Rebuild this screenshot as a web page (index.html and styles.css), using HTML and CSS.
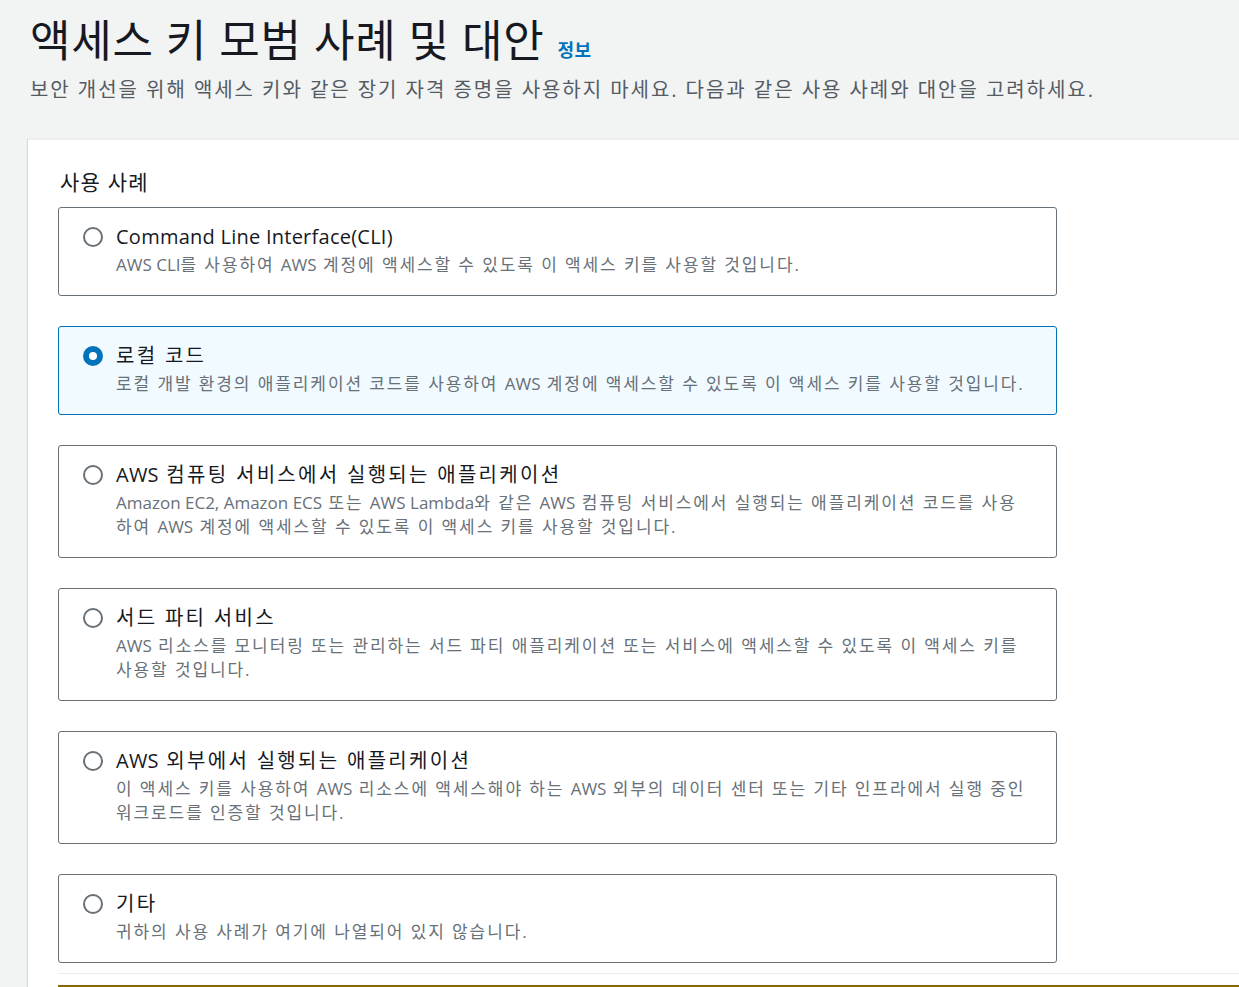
FILE: index.html
```html
<!DOCTYPE html>
<html lang="ko">
<head>
<meta charset="utf-8">
<link rel="stylesheet" href="styles.css">
</head>
<body>
<header class="page-header">
  <h1 class="title">액세스 키 모범 사례 및 대안<a class="info" href="#">정보</a></h1>
  <p class="subtitle">보안 개선을 위해 액세스 키와 같은 장기 자격 증명을 사용하지 마세요. 다음과 같은 사용 사례와 대안을 고려하세요.</p>
</header>
<main class="panel">
  <div class="group-label">사용 사례</div>
  <div class="cards">
    <label class="card">
      <span class="radio"></span>
      <span class="text">
        <span class="card-title"><span class="en">Command Line Interface(CLI)</span></span>
        <span class="card-desc"><span class="en">AWS CLI</span>를 사용하여 <span class="en">AWS</span> 계정에 액세스할 수 있도록 이 액세스 키를 사용할 것입니다.</span>
      </span>
    </label>
    <label class="card selected">
      <span class="radio"></span>
      <span class="text">
        <span class="card-title">로컬 코드</span>
        <span class="card-desc">로컬 개발 환경의 애플리케이션 코드를 사용하여 <span class="en">AWS</span> 계정에 액세스할 수 있도록 이 액세스 키를 사용할 것입니다.</span>
      </span>
    </label>
    <label class="card">
      <span class="radio"></span>
      <span class="text">
        <span class="card-title"><span class="en">AWS</span> 컴퓨팅 서비스에서 실행되는 애플리케이션</span>
        <span class="card-desc"><span class="en">Amazon EC2, Amazon ECS</span> 또는 <span class="en">AWS Lambda</span>와 같은 <span class="en">AWS</span> 컴퓨팅 서비스에서 실행되는 애플리케이션 코드를 사용하여 <span class="en">AWS</span> 계정에 액세스할 수 있도록 이 액세스 키를 사용할 것입니다.</span>
      </span>
    </label>
    <label class="card">
      <span class="radio"></span>
      <span class="text">
        <span class="card-title">서드 파티 서비스</span>
        <span class="card-desc"><span class="en">AWS</span> 리소스를 모니터링 또는 관리하는 서드 파티 애플리케이션 또는 서비스에 액세스할 수 있도록 이 액세스 키를 사용할 것입니다.</span>
      </span>
    </label>
    <label class="card">
      <span class="radio"></span>
      <span class="text">
        <span class="card-title"><span class="en">AWS</span> 외부에서 실행되는 애플리케이션</span>
        <span class="card-desc">이 액세스 키를 사용하여 <span class="en">AWS</span> 리소스에 액세스해야 하는 <span class="en">AWS</span> 외부의 데이터 센터 또는 기타 인프라에서 실행 중인 워크로드를 인증할 것입니다.</span>
      </span>
    </label>
    <label class="card">
      <span class="radio"></span>
      <span class="text">
        <span class="card-title">기타</span>
        <span class="card-desc">귀하의 사용 사례가 여기에 나열되어 있지 않습니다.</span>
      </span>
    </label>
  </div>
  <div class="divider"></div>
  <div class="alert-edge"></div>
</main>
</body>
</html>
```

FILE: styles.css
```css
html, body {
  margin: 0;
  padding: 0;
}
body {
  background: #f2f3f3;
  font-family: "Open Sans", "Noto Sans CJK KR", sans-serif;
  color: #16191f;
  width: 1239px;
  height: 987px;
  overflow: hidden;
}
.en {
  letter-spacing: 0;
}
.page-header {
  padding: 13px 0 0 30px;
  height: 139px;
  box-sizing: border-box;
}
.title {
  margin: 0;
  font-weight: 400;
  font-size: 44px;
  line-height: 54px;
  height: 54px;
  letter-spacing: 0.75px;
  color: #16191f;
}
.info {
  font-size: 18px;
  line-height: 1;
  font-weight: 700;
  letter-spacing: 0.5px;
  color: #0073bb;
  text-decoration: none;
  margin-left: 13px;
}
.subtitle {
  margin: 8px 0 0;
  font-size: 20px;
  line-height: 30px;
  letter-spacing: 1.95px;
  color: #545b64;
}
.panel {
  margin-left: 28px;
  background: #fff;
  border-top: 1px solid #eaeded;
  box-shadow: -1px 0 1px #d5dbdb;
  padding: 28px 0 0 30px;
  height: 848px;
  box-sizing: border-box;
}
.group-label {
  font-size: 21px;
  line-height: 28px;
  letter-spacing: 1.2px;
  color: #16191f;
  margin: 0 0 11px 2px;
}
.cards {
  display: flex;
  flex-direction: column;
  gap: 30px;
  width: 999px;
}
.card {
  display: flex;
  align-items: flex-start;
  gap: 13px;
  border: 1px solid #687078;
  border-radius: 3px;
  padding: 15px 28px 18px 24px;
  background: #fff;
}
.card.selected {
  background: #f1faff;
  border-color: #0073bb;
}
.radio {
  flex: none;
  width: 20px;
  height: 20px;
  box-sizing: border-box;
  border: 2px solid #687078;
  border-radius: 50%;
  margin-top: 4px;
  background: #fff;
}
.selected .radio {
  border: 6px solid #0073bb;
}
.text {
  display: flex;
  flex-direction: column;
}
.card-title {
  font-size: 20px;
  line-height: 28px;
  letter-spacing: 2.3px;
  color: #16191f;
}
.card-title .en {
  letter-spacing: 0.25px;
}
.card-desc {
  font-size: 17px;
  line-height: 24px;
  letter-spacing: 1.9px;
  color: #687078;
  margin-top: 2px;
}
.divider {
  margin-top: 10px;
  height: 1px;
  background: #eaeded;
}
.alert-edge {
  margin-top: 11px;
  height: 2px;
  background: #8d6605;
}
```
